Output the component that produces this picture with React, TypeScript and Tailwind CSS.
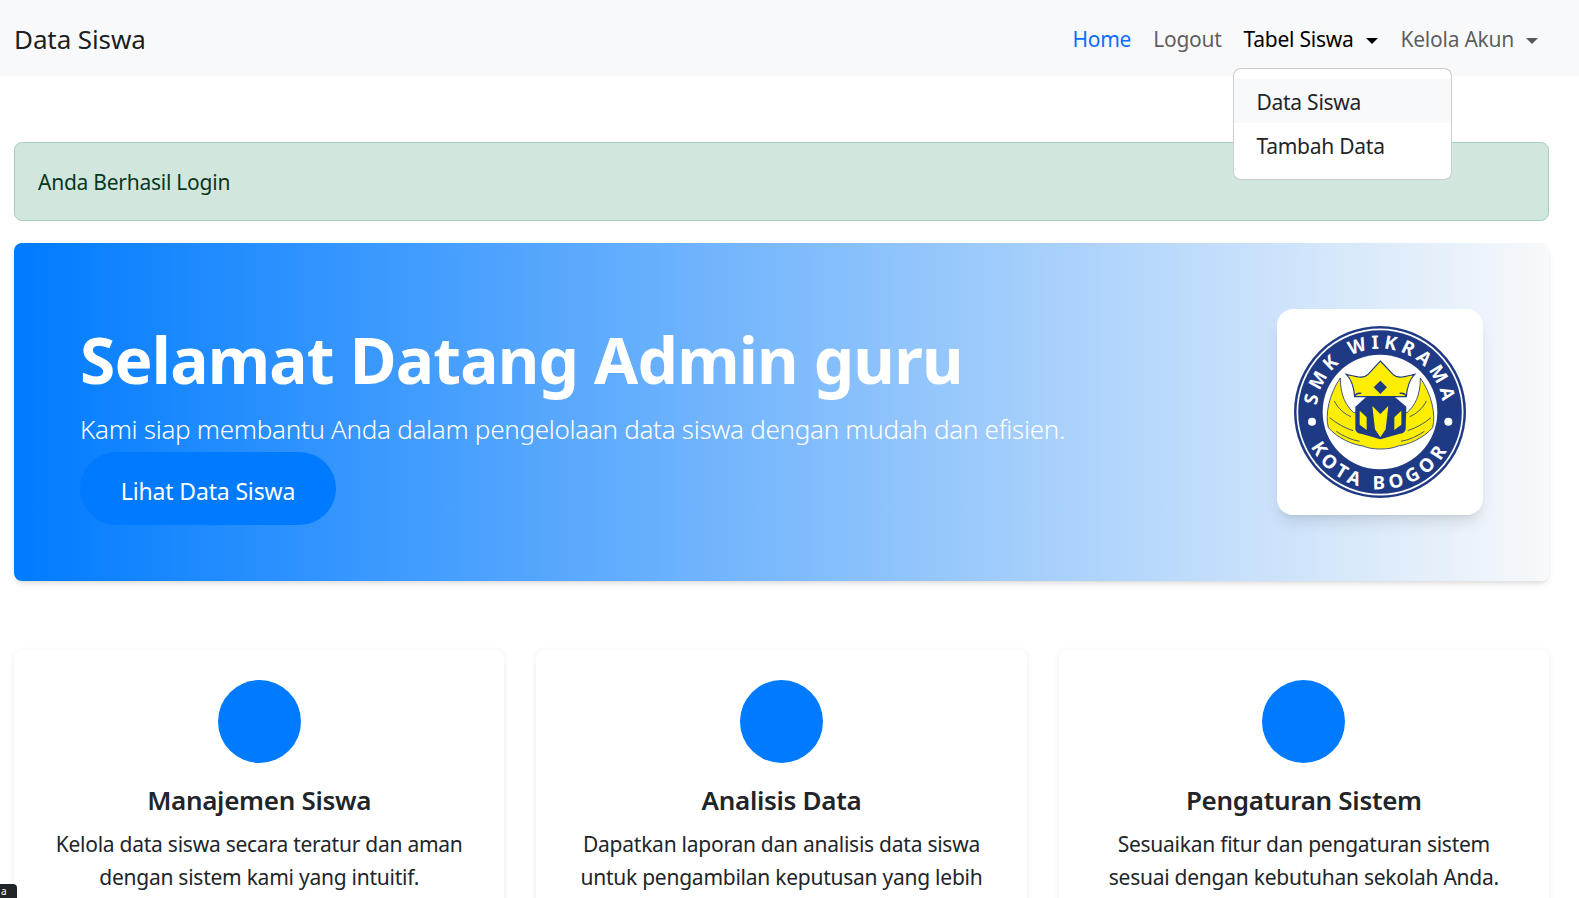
import React from "react";

const NAVY = "#1f3a84";
const YEL = "#fdee00";

function Logo() {
  return (
    <svg viewBox="103 75 516 516" className="w-[172px] h-[172px]">
      <defs>
        <path id="topArc" d="M 182.5 398 A 190 190 0 1 1 539.5 398" />
        <path id="botArc" d="M 132.5 373 A 232 232 0 0 0 589.5 373" />
      </defs>
      <circle cx="361" cy="333" r="258" fill={NAVY} />
      <circle cx="361" cy="333" r="248" fill="none" stroke="#fff" strokeWidth="5" />
      <circle cx="361" cy="333" r="172" fill="#fff" />
      <text fontFamily="'Noto Sans',sans-serif" fontWeight="700" fontSize="56" fill="#fff" letterSpacing="13" textAnchor="middle">
        <textPath href="#topArc" startOffset="50%">SMK WIKRAMA</textPath>
      </text>
      <text fontFamily="'Noto Sans',sans-serif" fontWeight="700" fontSize="56" fill="#fff" letterSpacing="15" textAnchor="middle">
        <textPath href="#botArc" startOffset="50%">KOTA BOGOR</textPath>
      </text>
      <circle cx="157" cy="362" r="12" fill="#fff" />
      <circle cx="566" cy="362" r="12" fill="#fff" />
      <g transform="translate(150 135)">
        <path d="M92 96 C58 145 46 205 56 245 C85 278 130 296 160 300 C185 312 240 312 265 300 C295 296 340 278 369 245 C379 205 366 145 332 96 C332 150 315 180 292 200 L132 200 C110 180 92 150 92 96Z" fill={YEL} stroke={NAVY} strokeWidth="2.5" />
        <path d="M74 165 C85 188 105 204 124 212 M60 215 C80 232 105 246 130 254 M80 256 C100 270 125 282 150 286 M350 165 C339 188 319 204 300 212 M364 215 C344 232 319 246 294 254 M344 256 C324 270 299 282 274 286" fill="none" stroke={NAVY} strokeWidth="2.5" />
        <path d="M212 45 L250 85 C265 100 285 92 315 85 C300 100 292 125 290 152 L135 152 C133 125 125 100 110 85 C140 92 160 100 175 85Z" fill={YEL} stroke={NAVY} strokeWidth="3.5" />
        <path d="M212 150 L255 152 L290 182 L288 250 Q286 262 268 264 L212 280 L157 264 Q139 262 137 250 L137 182 L170 152Z" fill={NAVY} />
        <path d="M212 104 L232 124 L212 144 L192 124Z" fill={NAVY} />
        <path d="M188 180 L212 204 L236 180 L228 250 L212 274 L196 250Z" fill={YEL} />
        <path d="M150 194 L171 214 L171 252 L150 236Z" fill={YEL} />
        <path d="M275 194 L254 214 L254 252 L275 236Z" fill={YEL} />
        <path d="M135 152 Q138 140 155 142 M290 152 Q287 140 270 142" fill="none" stroke={NAVY} strokeWidth="4" />
      </g>
    </svg>
  );
}

const cards = [
  { t: "Manajemen Siswa", d: "Kelola data siswa secara teratur dan aman dengan sistem kami yang intuitif." },
  { t: "Analisis Data", d: "Dapatkan laporan dan analisis data siswa untuk pengambilan keputusan yang lebih baik." },
  { t: "Pengaturan Sistem", d: "Sesuaikan fitur dan pengaturan sistem sesuai dengan kebutuhan sekolah Anda." },
];

function Caret({ c }: { c: string }) {
  return <span className={`inline-block ml-[12px] align-middle w-0 h-0 border-x-[6px] border-x-transparent border-t-[6px] ${c}`} />;
}

export default function App() {
  return (
    <div className="relative h-[898px] overflow-hidden bg-white font-['Noto_Sans',sans-serif] text-[#212529] text-[21px] leading-[33px] tracking-[-0.25px]">
      <nav className="h-[76px] bg-[#f8f9fa] flex items-center justify-between pl-[14px] pr-[41px] pt-[2px]">
        <span className="text-[26px] text-black/90 tracking-[-0.1px]">Data Siswa</span>
        <div className="relative flex items-center gap-[23px]">
          <span className="text-[#0d6efd] mr-[-1px]">Home</span>
          <span className="text-black/65 mr-[-1px]">Logout</span>
          <span className="text-black">Tabel Siswa<Caret c="border-t-black" /></span>
          <span className="text-black/65">Kelola Akun<Caret c="border-t-black/65" /></span>
          <div className="absolute left-[161px] top-[45px] w-[219px] h-[112px] z-10 bg-white border border-black/20 rounded-lg py-[10px]">
            <div className="h-[44px] bg-[#f8f9fa] px-[22px] pt-[3px] flex items-center">Data Siswa</div>
            <div className="h-[44px] px-[22px] pt-[3px] flex items-center">Tambah Data</div>
          </div>
        </div>
      </nav>
      <main className="pl-[14px] pr-[30px] pt-[66px]">
        <div className="h-[79px] rounded-lg bg-[#d1e7dd] border border-[#a3cfbb] text-[#0a3622] flex items-center px-[23px] pt-[2px]">Anda Berhasil Login</div>
        <section className="mt-[22px] h-[338px] rounded-lg bg-[linear-gradient(to_right,#007bff,#f8f9fa)] shadow-md flex items-center justify-between px-[66px] text-white">
          <div className="pt-[21px]">
            <h1 className="text-[64px] leading-[77px] font-bold tracking-[-0.8px]">Selamat Datang Admin guru</h1>
            <p className="mt-[11px] text-[26px] leading-[41px] font-light tracking-[-0.3px]">Kami siap membantu Anda dalam pengelolaan data siswa dengan mudah dan efisien.</p>
            <button className="mt-[2px] w-[256px] h-[73px] rounded-full bg-[#007bff] text-white text-[23px] pt-[6px] tracking-[-0.15px]">Lihat Data Siswa</button>
          </div>
          <div className="w-[206px] h-[206px] bg-white rounded-2xl shadow-lg flex items-center justify-center"><Logo /></div>
        </section>
        <div className="mt-[69px] grid grid-cols-3 gap-[32px]">
          {cards.map((c) => (
            <div key={c.t} className="bg-white rounded-lg shadow-[0_1px_6px_rgba(0,0,0,0.08)] pt-[30px] px-[33px] pb-[33px] text-center">
              <div className="w-[83px] h-[83px] rounded-full bg-[#007bff] mx-auto" />
              <h3 className="mt-[18px] text-[26px] leading-[38px] font-semibold tracking-[-0.3px]">{c.t}</h3>
              <p className="mt-[9px]">{c.d}</p>
            </div>
          ))}
        </div>
      </main>
      <div className="absolute left-0 bottom-0 w-[17px] h-[14px] bg-[#212529] rounded-tr text-white text-[10px] leading-[14px] pl-[1px]">a</div>
    </div>
  );
}
